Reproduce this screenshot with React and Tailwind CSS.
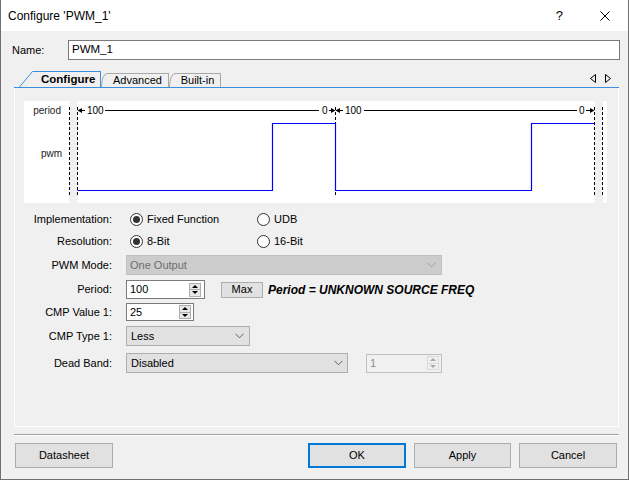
import React from "react";

function Radio({ checked, label, w }) {
  return (
    <div className={`flex items-center ${w || ""}`}>
      <span className="ml-[4px] w-[13px] h-[13px] rounded-full border border-[#333333] bg-white flex items-center justify-center">
        {checked && <span className="w-[7px] h-[7px] rounded-full bg-[#333333]" />}
      </span>
      <span className="ml-[4px] text-[11px] leading-none">{label}</span>
    </div>
  );
}

function Chevron({ color = "#606060" }) {
  return (
    <svg width="9" height="6" viewBox="0 0 9 6">
      <polyline points="0.5,0.8 4.5,4.8 8.5,0.8" fill="none" stroke={color} strokeWidth="1" />
    </svg>
  );
}

function Spin({ disabled }) {
  const c = disabled ? "#a8a8a8" : "#000000";
  return (
    <div
      className={`flex flex-col w-[12px] h-[14px] border ${
        disabled ? "border-[#dadada] bg-[#f0f0f0]" : "border-[#adadad] bg-[#e8e8e8]"
      }`}
    >
      <div className={`flex-1 flex items-center justify-center border-b ${disabled ? "border-[#dadada]" : "border-[#adadad]"}`}>
        <svg width="6" height="3" viewBox="0 0 6 3">
          <path d="M0 3 L3 0 L6 3 Z" fill={c} />
        </svg>
      </div>
      <div className="flex-1 flex items-center justify-center">
        <svg width="6" height="3" viewBox="0 0 6 3">
          <path d="M0 0 L3 3 L6 0 Z" fill={c} />
        </svg>
      </div>
    </div>
  );
}

function Row({ label, className, children }) {
  return (
    <div className={`flex items-center ${className}`}>
      <div className="w-[97px] text-right text-[11px] leading-none">{label}</div>
      <div className="ml-[14px] flex items-center h-full">{children}</div>
    </div>
  );
}

function Graph() {
  const dash = "3 2";
  const dx = [45.5, 53.5, 311.5, 570.5, 578.5];
  const tf = { fontFamily: '"Liberation Sans", Arial, sans-serif', fontSize: 10 };
  return (
    <svg width="583" height="102" viewBox="0 0 583 102" className="block">
      <rect x="0" y="0" width="45.5" height="102" fill="#ffffff" />
      <rect x="53.5" y="0" width="517.5" height="102" fill="#ffffff" />
      <rect x="579" y="0" width="4" height="102" fill="#ffffff" />
      {dx.map((x) => (
        <line key={x} x1={x} y1="6" x2={x} y2="96" stroke="#000" strokeWidth="1" strokeDasharray={dash} />
      ))}
      <text x="37" y="13" textAnchor="end" fill="#222" style={tf}>period</text>
      <text x="38" y="56" textAnchor="end" fill="#222" style={tf}>pwm</text>
      {/* first period */}
      <path d="M53.5 9.5 L58 7 L58 12 Z" fill="#000" />
      <line x1="58" y1="9.5" x2="61" y2="9.5" stroke="#000" />
      <text x="63" y="13" fill="#000" style={tf}>100</text>
      <line x1="81" y1="9.5" x2="295" y2="9.5" stroke="#000" />
      <text x="298" y="13" fill="#000" style={tf}>0</text>
      <line x1="305" y1="9.5" x2="307" y2="9.5" stroke="#000" />
      <path d="M311.5 9.5 L307 7 L307 12 Z" fill="#000" />
      {/* second period */}
      <path d="M311.5 9.5 L316 7 L316 12 Z" fill="#000" />
      <line x1="316" y1="9.5" x2="319" y2="9.5" stroke="#000" />
      <text x="321" y="13" fill="#000" style={tf}>100</text>
      <line x1="340" y1="9.5" x2="553" y2="9.5" stroke="#000" />
      <text x="555" y="13" fill="#000" style={tf}>0</text>
      <line x1="562" y1="9.5" x2="566" y2="9.5" stroke="#000" />
      <path d="M570.5 9.5 L566 7 L566 12 Z" fill="#000" />
      {/* pwm */}
      <path
        d="M53.5 89.5 H248.5 V22.5 H311.5 V89.5 H507.5 V22.5 H570.5"
        fill="none"
        stroke="#0000ff"
        strokeWidth="1.2"
      />
    </svg>
  );
}

export default function App() {
  const blue = "border-[#3c8dde]";
  return (
    <div className="w-[629px] h-[481px] bg-white font-['Liberation_Sans',Arial,sans-serif] text-black overflow-hidden">
      <div className="w-[629px] h-[480px] bg-[#f0f0f0] border-l border-r border-b border-[#707070] flex flex-col">
        {/* Title bar */}
        <div className="h-[31px] bg-white flex items-center shrink-0">
          <div className="pl-[7px] text-[12px] leading-none">Configure 'PWM_1'</div>
          <div className="ml-auto flex items-center mr-[18px]">
            <span className="text-[13px] leading-none">?</span>
            <svg width="10" height="10" viewBox="0 0 10 10" className="ml-[37px]">
              <path d="M0.5 0.5 L9.5 9.5 M9.5 0.5 L0.5 9.5" stroke="#000" strokeWidth="1" />
            </svg>
          </div>
        </div>

        {/* Name */}
        <div className="mt-[9px] h-[20px] flex items-center pl-[11px] shrink-0">
          <div className="w-[56px] text-[11px] leading-none">Name:</div>
          <div className="w-[552px] h-[20px] border border-[#7a7a7a] bg-white pl-[3px] flex items-center text-[11.5px] leading-none">
            PWM_1
          </div>
        </div>

        {/* Tabs */}
        <div className={`mt-[10px] ml-[13px] w-[605px] h-[18px] border-b ${blue} flex items-end shrink-0`}>
          <div className="ml-[5px] flex items-end h-[16px]">
            <svg width="14" height="16" viewBox="0 0 14 16" className="block">
              <path d="M0.5 16 L13.5 0.5 H14" fill="#f0f0f0" stroke="#3c8dde" strokeWidth="1" />
            </svg>
            <div className={`w-[68px] h-[16px] border-t border-r ${blue} flex items-center pl-[8px] text-[11.5px] font-bold leading-none`}>
              Configure
            </div>
          </div>
          <div className="flex items-end h-[14px]">
            <svg width="6" height="14" viewBox="0 0 6 14" className="block">
              <path d="M0.5 14 Q1 1.5 6 0.5" fill="none" stroke="#a8a8a8" strokeWidth="1" />
            </svg>
            <div className="w-[62px] h-[14px] border-t border-r border-[#a8a8a8] flex items-center justify-center text-[11px] leading-none">
              Advanced
            </div>
          </div>
          <div className="flex items-end h-[14px]">
            <svg width="6" height="14" viewBox="0 0 6 14" className="block">
              <path d="M0.5 14 Q1 1.5 6 0.5" fill="none" stroke="#a8a8a8" strokeWidth="1" />
            </svg>
            <div className="w-[46px] h-[14px] border-t border-r border-[#a8a8a8] flex items-center justify-center text-[11px] leading-none">
              Built-in
            </div>
          </div>
          <div className="ml-auto mr-[8px] self-center flex items-center gap-[9px] mb-[1px]">
            <svg width="6" height="9" viewBox="0 0 6 9">
              <path d="M5.5 0.5 L0.5 4.5 L5.5 8.5 Z" fill="none" stroke="#000" strokeWidth="1" />
            </svg>
            <svg width="6" height="9" viewBox="0 0 6 9">
              <path d="M0.5 0.5 L5.5 4.5 L0.5 8.5 Z" fill="none" stroke="#000" strokeWidth="1" />
            </svg>
          </div>
        </div>

        {/* Panel */}
        <div className="ml-[13px] w-[605px] h-[339px] border-l border-r border-b border-white flex flex-col shrink-0">
          <div className="mt-[13px] ml-[9px]">
            <Graph />
          </div>

          <Row label="Implementation:" className="mt-[8px] h-[16px]">
            <Radio checked label="Fixed Function" w="w-[127px]" />
            <Radio label="UDB" />
          </Row>
          <Row label="Resolution:" className="mt-[6px] h-[16px]">
            <Radio checked label="8-Bit" w="w-[127px]" />
            <Radio label="16-Bit" />
          </Row>
          <Row label="PWM Mode:" className="mt-[6px] h-[20px]">
            <div className="w-[316px] h-[20px] bg-[#cccccc] border border-[#bfbfbf] flex items-center pl-[3px] pr-[5px] text-[11px] text-[#6d6d6d] leading-none">
              <span>One Output</span>
              <span className="ml-auto flex"><Chevron color="#a0a0a0" /></span>
            </div>
          </Row>
          <Row label="Period:" className="mt-[5px] h-[19px]">
            <div className="w-[79px] h-[19px] bg-white border border-[#7a7a7a] flex items-center pl-[3px] pr-[3px] text-[11px] leading-none">
              <span>100</span>
              <span className="ml-auto flex"><Spin /></span>
            </div>
            <div className="ml-[16px] w-[42px] h-[16px] bg-[#e1e1e1] border border-[#adadad] flex items-center justify-center text-[11px] leading-none">
              Max
            </div>
            <div className="ml-[5px] text-[12px] font-bold italic leading-none">Period = UNKNOWN SOURCE FREQ</div>
          </Row>
          <Row label="CMP Value 1:" className="mt-[4px] h-[18px]">
            <div className="w-[68px] h-[18px] bg-white border border-[#7a7a7a] flex items-center pl-[3px] pr-[2px] text-[11px] leading-none">
              <span>25</span>
              <span className="ml-auto flex"><Spin /></span>
            </div>
          </Row>
          <Row label="CMP Type 1:" className="mt-[5px] h-[20px]">
            <div className="w-[124px] h-[20px] bg-[#e1e1e1] border border-[#adadad] flex items-center pl-[4px] pr-[5px] text-[11px] leading-none">
              <span>Less</span>
              <span className="ml-auto flex"><Chevron /></span>
            </div>
          </Row>
          <Row label="Dead Band:" className="mt-[7px] h-[20px]">
            <div className="w-[222px] h-[20px] bg-[#e1e1e1] border border-[#adadad] flex items-center pl-[4px] pr-[4px] text-[11px] leading-none">
              <span>Disabled</span>
              <span className="ml-auto flex"><Chevron /></span>
            </div>
            <div className="ml-[18px] w-[76px] h-[19px] bg-[#f0f0f0] border border-[#bfbfbf] flex items-center pl-[3px] pr-[2px] text-[11px] text-[#8a8a8a] leading-none">
              <span>1</span>
              <span className="ml-auto flex"><Spin disabled /></span>
            </div>
          </Row>
        </div>

        {/* Separator */}
        <div className="mt-[7px] ml-[13px] w-[605px] h-[2px] border-t border-[#a0a0a0] border-b border-b-white shrink-0" />

        {/* Buttons */}
        <div className="mt-[7px] h-[25px] flex shrink-0 text-[11px]">
          <div className="ml-[14px] w-[98px] h-[25px] bg-[#e1e1e1] border border-[#adadad] flex items-center justify-center leading-none">
            Datasheet
          </div>
          <div className="ml-[195px] w-[98px] h-[25px] bg-[#e1e1e1] border-2 border-[#0078d7] flex items-center justify-center leading-none">
            OK
          </div>
          <div className="ml-[8px] w-[97px] h-[25px] bg-[#e1e1e1] border border-[#adadad] flex items-center justify-center leading-none">
            Apply
          </div>
          <div className="ml-[8px] w-[98px] h-[25px] bg-[#e1e1e1] border border-[#adadad] flex items-center justify-center leading-none">
            Cancel
          </div>
        </div>
      </div>
    </div>
  );
}
